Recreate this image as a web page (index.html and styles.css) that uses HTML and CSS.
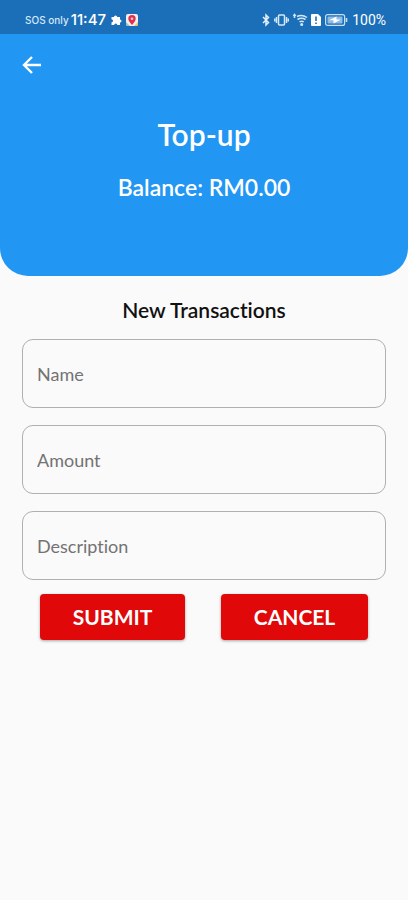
FILE: index.html
```html
<!DOCTYPE html>
<html lang="en">
<head>
<meta charset="utf-8">
<meta name="viewport" content="width=device-width, initial-scale=1">
<title>Top-up</title>
<link rel="stylesheet" href="styles.css">
</head>
<body>
<div class="status-bar">
  <div class="status-group">
    <span class="carrier">SOS only</span>
    <span class="clock">11:47</span>
    <svg class="icon-app" width="12" height="12" viewBox="0 0 12 12" aria-hidden="true"><path fill="#fff" d="M4 3a1.600 1.600 0 1 1 3.200 0H10v2.600a1.500 1.500 0 1 1 0 3V11H7.200a1.500 1.500 0 0 0-3 0H1.500V8.200a1.500 1.500 0 0 0 0-3V3z"/></svg>
    <svg class="icon-app" width="12" height="12" viewBox="0 0 12 12" aria-hidden="true"><rect width="12" height="12" rx="2" fill="#f5eef0"/><path fill="#8fc7c5" d="M0 8l4 4H2a2 2 0 0 1-2-2z"/><path fill="#f2c469" d="M8 12l4-4v2a2 2 0 0 1-2 2z"/><path fill="#e0304a" d="M6 11C4 8.500 2.300 7 2.300 4.800a3.700 3.700 0 0 1 7.400 0C9.700 7 8 8.500 6 11z"/><circle cx="6" cy="4.700" r="1.300" fill="#f8c9d0"/></svg>
  </div>
  <div class="status-group">
    <svg width="8" height="14" viewBox="0 0 8 14" fill="none" stroke="#e4f1fb" stroke-width="1.500" aria-hidden="true"><path d="M1 4l5.500 5.500L4 12V2l2.500 2.500L1 10"/></svg>
    <svg class="icon-vibrate" width="15" height="14" viewBox="0 0 15 14" fill="none" stroke="#d5e8f8" stroke-width="1.500" aria-hidden="true"><rect x="4.500" y="2" width="6" height="10" rx="1"/><path d="M2.500 4v6M.7 5.500v3M12.500 4v6M14.300 5.500v3"/></svg>
    <svg width="15" height="14" viewBox="0 0 15 14" fill="none" stroke="#d5e8f8" stroke-width="1.500" aria-hidden="true"><path d="M1.500 1.500v3.500M.3 3l1.200-1.500L2.700 3M4 3.500q5-2.500 10 1M4.500 6.500q4-2.500 8 0M6.500 9q2.200-1.500 4.300 0"/><circle cx="8.700" cy="11.500" r=".8" fill="#d5e8f8"/></svg>
    <svg width="12" height="14" viewBox="0 0 12 14" aria-hidden="true"><path fill="#fff" d="M1 2a1 1 0 0 1 1-1h6l3 3v8a1 1 0 0 1-1 1H2a1 1 0 0 1-1-1z"/><path stroke="#1b6fb8" stroke-width="1.600" d="M6 3.500v4.500M6 9.500v1.600"/></svg>
    <svg width="24" height="14" viewBox="0 0 24 14" aria-hidden="true"><rect x="1.600" y="1.600" width="19" height="10.800" rx="2" fill="none" stroke="#c5dff4" stroke-width="1.200"/><rect x="3.500" y="3.500" width="15" height="7" rx="1" fill="#8fbce3"/><path fill="#fff" d="M12.500 3.500L5 7.300h4.500L9.500 10.500l7.500-4h-4.500z"/><path stroke="#c5dff4" stroke-width="1.600" d="M22.500 5v4"/></svg>
    <span class="battery">100%</span>
  </div>
</div>
<header class="hero">
  <button class="back" type="button" aria-label="Back">
    <svg width="20" height="18" viewBox="0 0 20 18" fill="none" stroke="#fff" stroke-width="2.400" aria-hidden="true"><path d="M19 9H2.500M10 1L2 9l8 8"/></svg>
  </button>
  <h1 class="title">Top-up</h1>
  <p class="balance">Balance: RM0.00</p>
</header>
<main class="content">
  <h2 class="heading">New Transactions</h2>
  <form class="form">
    <label class="field"><input type="text" placeholder="Name" aria-label="Name"></label>
    <label class="field"><input type="text" inputmode="decimal" placeholder="Amount" aria-label="Amount"></label>
    <label class="field"><input type="text" placeholder="Description" aria-label="Description"></label>
    <div class="actions">
      <button class="action" type="submit">SUBMIT</button>
      <button class="action" type="button">CANCEL</button>
    </div>
  </form>
</main>
</body>
</html>
```
FILE: styles.css
```css
* {
  box-sizing: border-box;
}

body {
  margin: 0;
  min-height: 100vh;
  background: #fafafa;
  color: #111;
  font-family: Lato, "Open Sans", sans-serif;
  font-variant-ligatures: none;
}

.status-bar {
  display: flex;
  justify-content: space-between;
  height: 34px;
  padding: 6px 22px 0 25px;
  background: #1b6fb8;
  color: #fff;
}

.status-group {
  display: flex;
  align-items: center;
  gap: 2px;
}

.carrier {
  font: 500 10px/16px Inter, sans-serif;
  color: #d5e8f8;
}

.clock {
  font: 500 15px/16px Inter, sans-serif;
}

.icon-app {
  margin-left: 2px;
}

.icon-vibrate {
  margin: 0 2px;
}

.battery {
  margin-left: 2px;
  font: 400 14px/16px Roboto, sans-serif;
}

.hero {
  display: flex;
  flex-direction: column;
  align-items: center;
  height: 242px;
  padding-top: 16px;
  border-radius: 0 0 28px 28px;
  background: #2196f3;
  color: #fff;
}

.back {
  align-self: flex-start;
  display: flex;
  align-items: center;
  height: 30px;
  margin-left: 22px;
  padding: 0;
  border: 0;
  background: none;
}

.title {
  margin: 36px 0 0;
  font-size: 30px;
  line-height: 36px;
  font-weight: 600;
}

.balance {
  margin: 20px 0 0;
  font-size: 23px;
  line-height: 30px;
  font-weight: 600;
}

.content {
  padding: 20px 22px;
}

.heading {
  margin: 0 0 15px;
  font-size: 21px;
  line-height: 28px;
  font-weight: 600;
  text-align: center;
}

.form {
  display: flex;
  flex-direction: column;
}

.field {
  margin-bottom: 17px;
}

.field input {
  display: block;
  width: 100%;
  height: 69px;
  padding: 0 14px;
  border: 1px solid #b0b0b0;
  border-radius: 11px;
  background: transparent;
  color: #111;
  font: 400 18px/24px Lato, sans-serif;
  font-variant-ligatures: none;
}

.field:nth-of-type(3) {
  margin-bottom: 14px;
}

.field input::placeholder {
  color: #737373;
  opacity: 1;
}

.actions {
  display: flex;
  justify-content: space-around;
}

.action {
  height: 46px;
  padding: 0 33px;
  border: 0;
  border-radius: 4px;
  background: #e00808;
  box-shadow: 0 1px 3px rgba(0, 0, 0, 0.35);
  color: #fff;
  font: 700 21px/24px Lato, sans-serif;
}
```
